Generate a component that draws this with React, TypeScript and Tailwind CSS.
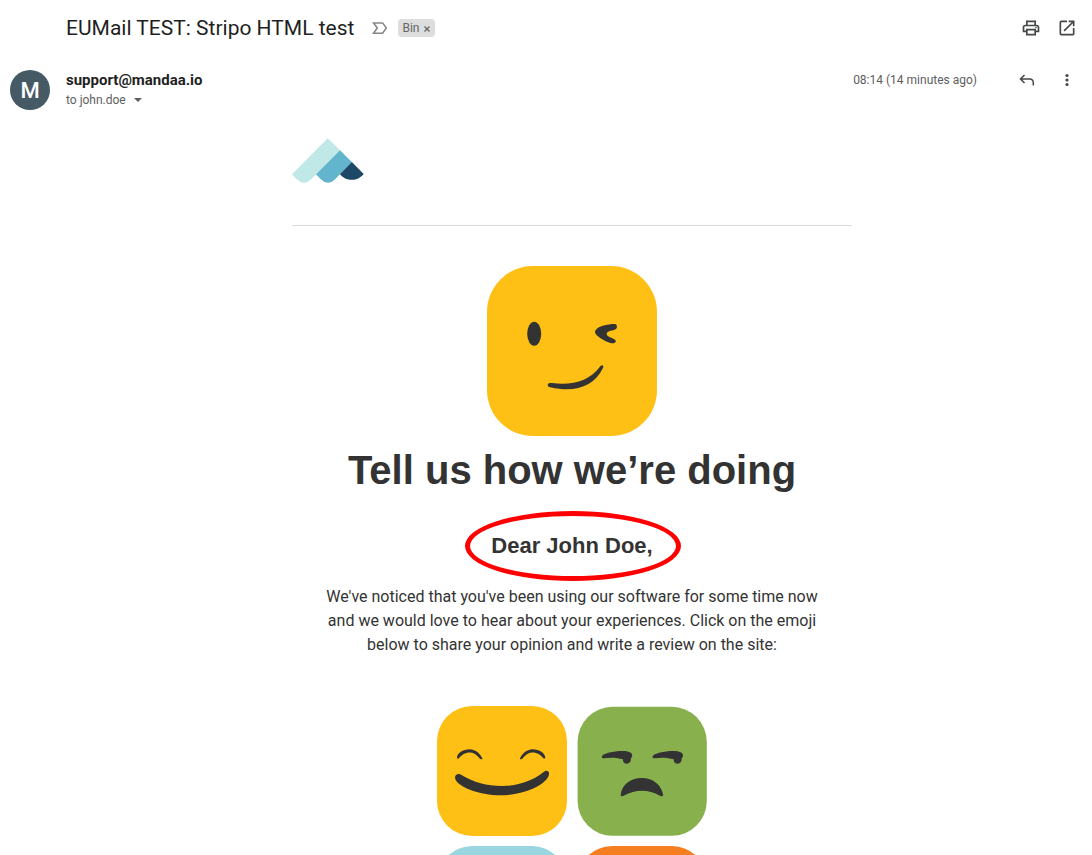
import type { ReactNode } from "react";
import { MdOutlinePrint, MdOpenInNew } from "react-icons/md";

const INK = "#333333";

function Tile({ color, size, label, children }: { color: string; size: number; label: string; children?: ReactNode }) {
  return (
    <svg width={size} height={size} viewBox={`0 0 ${size} ${size}`} role="img" aria-label={label} className="block">
      <rect width={size} height={size} rx={size * 0.27} fill={color} />
      {children}
    </svg>
  );
}

function WinkFace() {
  return (
    <Tile color="#ffc015" size={170} label="Winking face">
      <ellipse cx="47.2" cy="67.8" rx="7" ry="12" fill={INK} />
      <path
        d="M108 65.7C108.500 62.500 114 59.500 120 58.700C124 57.800 126.500 57.800 128 58C130.500 58.700 130.300 61.500 129 63C127.500 64.800 119.700 64.500 119.700 68C119.700 71.800 128.800 72 128.800 75C128.800 77.300 126 77.800 123.500 77C118 75.500 107.500 69.500 108 65.700Z"
        fill={INK}
      />
      <path
        d="M60.700 119C60.800 117 63 116.800 65 117.100C86 119.300 102 115.500 113.500 100C115 98.400 117 99.500 116.200 101.500C107 121 88 126.500 64 121.500C62 121 60.600 120.500 60.700 119Z"
        fill={INK}
      />
    </Tile>
  );
}

function HappyFace() {
  return (
    <Tile color="#ffc015" size={130} label="Happy">
      <path
        d="M20 51.500C20 47.500 26 43.300 32.500 43.300C39 43.300 43.500 48.500 45.500 52.500C45.600 53.600 44 53.500 43 52.700C39.500 48.500 36.500 46.600 32.500 46.600C28.500 46.600 24.500 49 22 52.300C21 53 20 52.700 20 51.500Z"
        fill={INK}
      />
      <path
        d="M108.300 51.500C108.300 47.500 102.300 43.300 95.800 43.300C89.300 43.300 84.800 48.500 82.800 52.500C82.700 53.600 84.300 53.500 85.300 52.700C88.800 48.500 91.800 46.600 95.800 46.600C99.800 46.600 103.800 49 106.300 52.300C107.300 53 108.300 52.700 108.300 51.500Z"
        fill={INK}
      />
      <path
        d="M18 71.500C18 68.300 21.500 67 24.500 69C49 84 84 84 106 66.500C108.800 63.800 112.300 64.500 112 68C111.500 77.500 88 89.300 64 89.300C42 89.300 18.500 80.500 18 71.500Z"
        fill={INK}
      />
    </Tile>
  );
}

function UnamusedFace() {
  const eye =
    "M24.700 50.500C25.500 47.200 37 44.900 45 44.900C52 44.900 55.200 46.500 55.200 49.500C55.200 51 54.300 51.500 53.800 53C54 56 52 57.700 49.600 57.700C47.300 57.700 45.700 56 45.900 53.300C40 51.300 33 51.300 26.500 52.300C25.300 52.300 24.600 51.500 24.700 50.500Z";
  return (
    <svg width="130" height="130" viewBox="0 0 130 130" role="img" aria-label="Unamused" className="block">
      <rect x="0.6" y="0.8" width="129.200" height="129" rx="35" fill="#88b14e" />
      <path d={eye} fill={INK} />
      <path d={eye} fill={INK} transform="translate(50.800 0)" />
      <path
        d="M43.700 88.500C45 79 53 72 64.700 72C76.500 72 84.700 79.500 86 88.500C86.200 90.300 85 90.800 83 89.700C71 83.200 59 83.200 46.700 89.800C44.800 90.700 43.500 90.300 43.700 88.500Z"
        fill={INK}
      />
    </svg>
  );
}

function Logo() {
  return (
    <svg width="72" height="45" viewBox="0 0 72 45" role="img" aria-label="Mandaa" className="block">
      <path d="M35.700 0.200L48 12.300L24 36.300C18 42.500 16 44.700 12 44.700C8 44.700 6 42.500 0 36.300Z" fill="#bfe8e7" />
      <path d="M48 12.300L59.800 24.100L47.800 36.300C42 42.500 40 44.700 36 44.700C32 44.700 30 42.500 24 36.300Z" fill="#62b5cd" />
      <path d="M59.800 24.100L71.700 36C68 40 65 41.800 59.800 41.800C54.500 41.800 51.500 40 47.800 36.300Z" fill="#1c4766" />
    </svg>
  );
}

const ratings = [
  { id: "happy", face: <HappyFace /> },
  { id: "unamused", face: <UnamusedFace /> },
  { id: "calm", face: <Tile color="#9ad6e0" size={130} label="Calm" /> },
  { id: "angry", face: <Tile color="#f57f20" size={130} label="Angry" /> },
];

export default function App() {
  return (
    <div className="h-screen overflow-hidden bg-white font-['Roboto',sans-serif] text-[#202124]">
      <header className="flex items-center pt-4 pr-[15px] pl-[66px]">
        <h1 className="text-[21px] leading-6 text-[#1f1f1f]">EUMail TEST: Stripo HTML test</h1>
        <svg width="16" height="16" viewBox="0 0 16 16" className="ml-[18px]" aria-hidden="true">
          <path d="M1.500 2.900H10.600L14.300 8L10.600 13.200H1.500L5.300 8Z" fill="none" stroke="#858585" strokeWidth="1.500" />
        </svg>
        <span className="ml-2.5 flex h-[18px] items-center gap-1 rounded bg-[#dddddd] px-1 text-xs text-[#666666]">
          Bin
          <button type="button" aria-label="Remove label Bin">
            <svg width="8" height="8" viewBox="0 0 8 8" className="block">
              <path d="M1.500 2.500L6.500 7.500M6.500 2.500L1.500 7.500" stroke="#666666" strokeWidth="1.300" />
            </svg>
          </button>
        </span>
        <div className="ml-auto flex gap-4 text-[#444746]">
          <button type="button" aria-label="Print all">
            <MdOutlinePrint className="size-5" />
          </button>
          <button type="button" aria-label="In new window">
            <MdOpenInNew className="size-5" />
          </button>
        </div>
      </header>

      <section className="flex items-start pt-[30px] pr-[15px] pl-[10px]">
        <div className="flex size-10 items-center justify-center rounded-full bg-[#455a64] text-[22px] font-medium text-white">M</div>
        <div className="ml-4">
          <p className="text-[15px] leading-5 font-bold text-[#1f1f1f]">support@mandaa.io</p>
          <button type="button" className="flex items-center gap-1.5 text-xs leading-5 text-[#5e5e5e]">
            to john.doe
            <svg width="12" height="12" viewBox="0 0 12 12" aria-hidden="true">
              <path d="M2 4H10L6 8Z" fill="#5e5e5e" />
            </svg>
          </button>
        </div>
        <time className="ml-auto text-xs leading-5 text-[#5e5e5e]">08:14 (14 minutes ago)</time>
        <div className="ml-10 flex gap-5 text-[#444746]">
          <button type="button" aria-label="Reply">
            <svg width="20" height="20" viewBox="0 0 20 20" fill="none" stroke="currentColor" strokeWidth="1.500">
              <path d="M7.500 5L3.500 9L7.500 13M3.500 9H12.500C15 9 16.300 10.500 16.300 13V15.500" />
            </svg>
          </button>
          <button type="button" aria-label="More">
            <svg width="20" height="20" viewBox="0 0 20 20" fill="currentColor">
              <circle cx="10" cy="5.500" r="1.600" />
              <circle cx="10" cy="10" r="1.600" />
              <circle cx="10" cy="14.500" r="1.600" />
            </svg>
          </button>
        </div>
      </section>

      <main className="pt-7 pr-[14px] pl-[66px]">
        <article className="mx-auto flex max-w-[560px] flex-col items-center text-center text-[#333333]">
          <div className="w-full border-b border-[#dadada] pb-[42px]">
            <Logo />
          </div>
          <div className="pt-10">
            <WinkFace />
          </div>
          <h2 className="pt-2 font-['Liberation_Sans',sans-serif] text-[40px] leading-[52px] font-bold">Tell us how we’re doing</h2>
          <div className="relative mt-[15px] flex h-[70px] w-[216px] items-center justify-center">
            <h3 className="font-['Liberation_Sans',sans-serif] text-[22px] leading-7 font-bold">Dear John Doe,</h3>
            <div className="absolute top-0 left-px h-full w-full rounded-[50%] border-5 border-[#ff0000]" />
          </div>
          <p className="mt-1 max-w-[520px] text-base leading-6">
            We've noticed that you've been using our software for some time now and we would love to hear about your experiences.
            Click on the emoji below to share your opinion and write a review on the site:
          </p>
          <div className="mt-[49px] grid grid-cols-2 gap-2.5">
            {ratings.map((r) => (
              <a key={r.id} href={`#${r.id}`}>
                {r.face}
              </a>
            ))}
          </div>
        </article>
      </main>
    </div>
  );
}
